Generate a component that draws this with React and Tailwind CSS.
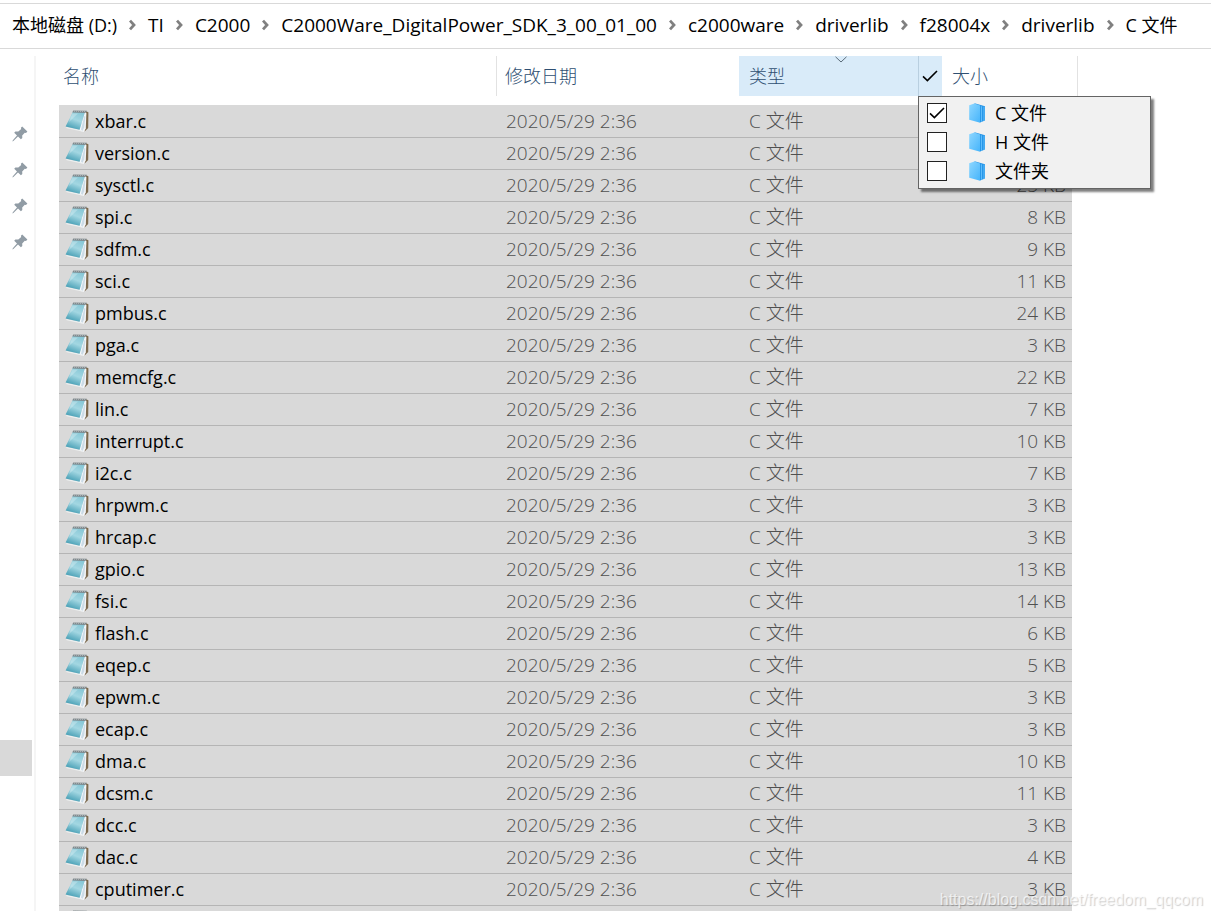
import React, { useState } from 'react'
import clsx from 'clsx'

const crumbs = [
  'TI',
  'C2000',
  'C2000Ware_DigitalPower_SDK_3_00_01_00',
  'c2000ware',
  'driverlib',
  'f28004x',
  'driverlib',
]

const files = [
  { name: 'xbar.c', size: 4 },
  { name: 'version.c', size: 3 },
  { name: 'sysctl.c', size: 25 },
  { name: 'spi.c', size: 8 },
  { name: 'sdfm.c', size: 9 },
  { name: 'sci.c', size: 11 },
  { name: 'pmbus.c', size: 24 },
  { name: 'pga.c', size: 3 },
  { name: 'memcfg.c', size: 22 },
  { name: 'lin.c', size: 7 },
  { name: 'interrupt.c', size: 10 },
  { name: 'i2c.c', size: 7 },
  { name: 'hrpwm.c', size: 3 },
  { name: 'hrcap.c', size: 3 },
  { name: 'gpio.c', size: 13 },
  { name: 'fsi.c', size: 14 },
  { name: 'flash.c', size: 6 },
  { name: 'eqep.c', size: 5 },
  { name: 'epwm.c', size: 3 },
  { name: 'ecap.c', size: 3 },
  { name: 'dma.c', size: 10 },
  { name: 'dcsm.c', size: 11 },
  { name: 'dcc.c', size: 3 },
  { name: 'dac.c', size: 4 },
  { name: 'cputimer.c', size: 3 },
  { name: 'cmpss.c', size: 4 },
]

const typeFilters = ['C 文件', 'H 文件', '文件夹']

const ChevronIcon = () => (
  <svg viewBox="0 0 7 12" className="w-[7px] h-3 shrink-0" fill="none" stroke="#808080" strokeWidth="2.8">
    <path d="M1 1.6 L5 6 L1 10.4" />
  </svg>
)

const PinIcon = () => (
  <svg viewBox="0 0 16 16" className="w-4 h-4" fill="#919ca5">
    <path d="M10.2 0.6 L15.4 5.6 L14 7 L12.8 6.7 L10.2 9.4 L10.3 12 L8.9 13.2 L6 10.4 L1.4 15 L0.4 15.4 L0.8 14.3 L5 9.6 L2.2 6.8 L3.4 5.5 L6.3 5.6 L9.2 3 L8.9 1.8 Z" />
  </svg>
)

const FileIcon = () => (
  <svg viewBox="0 0 24 24" className="w-6 h-6 shrink-0">
    <defs>
      <linearGradient id="cover" x1="0.7" y1="0" x2="0.3" y2="1">
        <stop offset="0" stopColor="#86c6d5" />
        <stop offset="0.45" stopColor="#a3d7e2" />
        <stop offset="1" stopColor="#3f9ab1" />
      </linearGradient>
    </defs>
    <path d="M20.4 2 L23.4 3.2 L23.2 19 L19.6 22.6 Z" fill="#7d6a4e" />
    <path d="M20 3 L21.4 4 L20.8 19.6 L18.8 23 L14 21.6 Z" fill="#f4f6f8" />
    <path d="M19.4 7 L20.4 7.4 L19.2 18.6 L17.4 22 L16 20.6 Z" fill="#cbdbe6" />
    <path d="M0.6 18 L14.4 20.6 L18 22.8 L1.8 19.2 Z" fill="#eef0f0" />
    <path d="M8 2.6 L20 3 L14.6 20.8 L0.6 17.6 Z" fill="url(#cover)" />
    <path d="M8.2 1.4 L22 1.8 L20.2 4 L7.4 3.4 Z" fill="#7f898d" />
    <path d="M9 2.2 L20.6 2.6" stroke="#c4c9ca" strokeWidth="0.7" strokeDasharray="1 1" />
    <path d="M7.4 4.6 L13 4.4 L3.8 13.2 Z" fill="#ffffff" opacity="0.25" />
  </svg>
)

const FolderIcon = () => (
  <svg viewBox="0 0 16 20" className="w-4 h-5 shrink-0">
    <defs>
      <linearGradient id="folder" x1="0" y1="0" x2="1" y2="1">
        <stop offset="0" stopColor="#8fd7ff" />
        <stop offset="1" stopColor="#45b4fb" />
      </linearGradient>
    </defs>
    <path d="M5 0.8 L6.4 0.4 L16 3.2 L16 17.6 L11 19.4 Z" fill="#1f8fe4" />
    <path d="M0.2 2.2 L5.4 0.4 L11.2 2.6 L11.2 19.8 L0.2 16.8 Z" fill="url(#folder)" />
    <path d="M12.6 3.2 V18.8 M15 3.6 V18" stroke="#62c0fc" strokeWidth="1.1" />
  </svg>
)

const CheckMark = ({ className }) => (
  <svg viewBox="0 0 16 16" className={className} fill="none" stroke="currentColor" strokeWidth="1.6">
    <path d="M1 8.4 L5.4 12.6 L15 3" />
  </svg>
)

const ColumnTitle = ({ children, className }) => (
  <button className={clsx('flex h-10 w-full items-center text-left font-light text-[#2f4f72]', className)}>
    {children}
  </button>
)

const TypeMenu = ({ checked, onToggle }) => (
  <div className="absolute left-[179px] top-10 z-10 w-[233px] border border-[#646464] bg-[#f1f1f1] pb-[3px] pl-2 pt-px text-black font-normal shadow-[3px_3px_2px_rgba(0,0,0,0.5)]">
    {typeFilters.map((type) => (
      <label key={type} className="flex h-[29px] items-center">
        <span className="relative mr-[22px] h-5 w-5">
          <input
            type="checkbox"
            checked={checked.includes(type)}
            onChange={() => onToggle(type)}
            className="peer block h-5 w-5 appearance-none border border-[#222] bg-white"
          />
          <CheckMark className="pointer-events-none absolute left-0.5 top-0.5 hidden h-4 w-4 peer-checked:block" />
        </span>
        <FolderIcon />
        <span className="ml-2.5">{type}</span>
      </label>
    ))}
  </div>
)

const App = () => {
  const [checked, setChecked] = useState(['C 文件'])
  const [menuOpen, setMenuOpen] = useState(true)

  const toggleType = (type) => {
    setChecked((prev) => (prev.includes(type) ? prev.filter((t) => t !== type) : [...prev, type]))
  }

  return (
    <div className="relative flex h-screen flex-col overflow-hidden bg-white pb-2 pt-[3px] font-['Open_Sans','Noto_Sans_CJK_SC',sans-serif] text-[18px] leading-6 text-black">
      {/* Address bar */}
      <nav className="flex h-[46px] shrink-0 items-center gap-3 whitespace-nowrap border-y border-[#d9d9d9] pb-0.5 pl-3">
        <a href="#">本地磁盘 (D:)</a>
        {crumbs.map((crumb, i) => (
          <React.Fragment key={i}>
            <ChevronIcon />
            <a href="#" className="text-[19px]">{crumb}</a>
          </React.Fragment>
        ))}
        <ChevronIcon />
        <a href="#">C 文件</a>
      </nav>

      <div className="flex min-h-0 flex-1 pt-[7px]">
        {/* Quick access pane */}
        <aside className="flex w-9 shrink-0 flex-col border-r-2 border-[#f5f5f5] pt-[70px]">
          <div className="flex flex-col gap-5 pl-3">
            <PinIcon />
            <PinIcon />
            <PinIcon />
            <PinIcon />
          </div>
          <div className="mt-[490px] h-9 w-8 shrink-0 bg-[#d9d9d9]" />
        </aside>

        {/* File list */}
        <main className="min-w-0 flex-1 overflow-hidden pl-[23px] pr-[133px]">
          <table className="w-full table-fixed border-separate border-spacing-0">
            <colgroup>
              <col />
              <col className="w-[243px]" />
              <col className="w-[203px]" />
              <col className="w-[130px]" />
              <col className="w-1.5" />
            </colgroup>
            <thead>
              <tr className="h-[49px] align-top">
                <th className="p-0">
                  <ColumnTitle className="pl-1">名称</ColumnTitle>
                </th>
                <th className="p-0">
                  <ColumnTitle className="border-l border-[#e2e2e2] pl-2">修改日期</ColumnTitle>
                </th>
                <th className="relative p-0">
                  <div className="flex bg-[#d9ebf9]">
                    <ColumnTitle className="pl-2.5">类型</ColumnTitle>
                    <button
                      aria-label="筛选"
                      onClick={() => setMenuOpen(!menuOpen)}
                      className="flex h-10 w-6 shrink-0 items-center border-l border-[#b9cfe0] pl-[3px]"
                    >
                      <CheckMark className="h-4 w-4" />
                    </button>
                  </div>
                  <svg viewBox="0 0 12 7" className="absolute left-[96px] top-0 h-[7px] w-3" fill="none" stroke="#5b6b78">
                    <path d="M0.5 0.8 L6 6 L11.5 0.8" />
                  </svg>
                  {menuOpen && <TypeMenu checked={checked} onToggle={toggleType} />}
                </th>
                <th colSpan={2} className="p-0">
                  <ColumnTitle className="border-r border-[#e2e2e2] pl-2.5">大小</ColumnTitle>
                </th>
              </tr>
            </thead>
            <tbody>
              {files.map((file) => (
                <tr
                  key={file.name}
                  className="h-8 text-[19px] font-light text-[#505050] *:border-t *:border-[#b5b5b5] *:bg-[#d9d9d9] *:pb-0.5 *:pt-0 first:*:border-[#d9d9d9]"
                >
                  <td className="px-1.5 text-[18px] font-normal text-black">
                    <div className="flex items-center gap-1.5">
                      <FileIcon />
                      {file.name}
                    </div>
                  </td>
                  <td className="px-2.5">2020/5/29 2:36</td>
                  <td className="px-2.5">C 文件</td>
                  <td className="px-1.5 text-right">{file.size} KB</td>
                </tr>
              ))}
            </tbody>
          </table>
        </main>
      </div>

      <p className="pointer-events-none absolute bottom-[7px] right-2 font-['Liberation_Sans',sans-serif] text-[16px] text-white/70 [text-shadow:1px_1px_1px_rgba(0,0,0,0.2)]">
        https://blog.csdn.net/freedom_qqcom
      </p>
    </div>
  )
}

export default App
